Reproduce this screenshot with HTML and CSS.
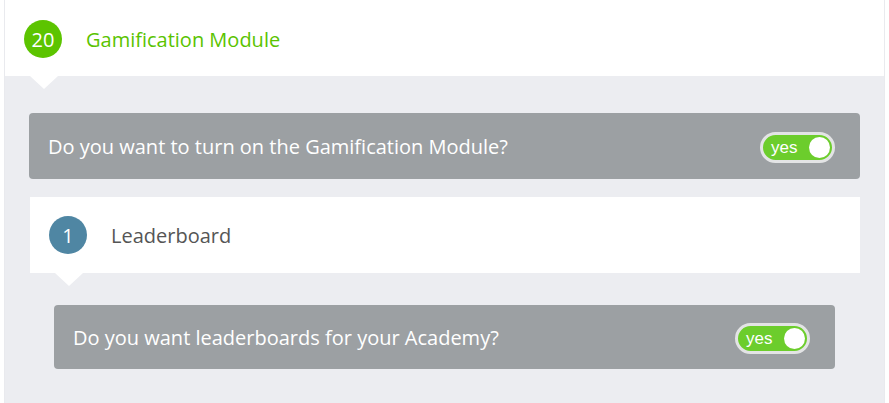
FILE: index.html
```html
<!DOCTYPE html>
<html>
<head>
<meta charset="utf-8">
<link rel="stylesheet" href="styles.css">
</head>
<body>
<div class="panel">
  <div class="step-head">
    <span class="badge badge-green">20</span>
    <span class="step-title">Gamification Module</span>
    <span class="arrow"></span>
  </div>
  <div class="step-body">
    <div class="question">
      <span class="q-text">Do you want to turn on the Gamification Module?</span>
      <span class="toggle"><span class="toggle-label">yes</span><span class="knob"></span></span>
    </div>
    <div class="sub-head">
      <span class="badge badge-blue">1</span>
      <span class="sub-title">Leaderboard</span>
      <span class="arrow arrow-sub"></span>
    </div>
    <div class="sub-body">
      <div class="question">
        <span class="q-text">Do you want leaderboards for your Academy?</span>
        <span class="toggle"><span class="toggle-label">yes</span><span class="knob"></span></span>
      </div>
    </div>
  </div>
</div>
</body>
</html>
```
FILE: styles.css
```css
html, body { margin: 0; padding: 0; background: #fff; }
body { font-family: "Open Sans", "Liberation Sans", sans-serif; }
.panel {
  margin-left: 4px;
  width: 881px;
  border-left: 1px solid #e9eaee;
  border-right: 1px solid #e9eaee;
  box-sizing: border-box;
}
.step-head {
  position: relative;
  height: 76px;
  display: flex;
  align-items: center;
  padding-left: 19px;
  padding-top: 2px;
  box-sizing: border-box;
  background: #fff;
}
.badge {
  width: 38px; height: 38px; border-radius: 50%;
  display: flex; align-items: center; justify-content: center;
  color: #fff; font-size: 20px; flex: none;
}
.badge-green { background: #5cc400; }
.badge-blue { background: #4f86a3; }
.step-title { margin-left: 24px; color: #5ac300; font-size: 20px; }
.arrow {
  position: absolute; left: 25px; bottom: -13px;
  width: 0; height: 0;
  border-left: 14px solid transparent;
  border-right: 14px solid transparent;
  border-top: 13px solid #fff;
}
.step-body {
  background: #ecedf1;
  padding: 37px 24px 34px 24px;
}
.question {
  height: 66px;
  background: #9ca0a3;
  border-radius: 4px;
  display: flex; align-items: center; justify-content: space-between;
  padding: 0 25px 0 19px;
  box-sizing: border-box;
}
.q-text { color: #fff; font-size: 20px; }
.toggle {
  width: 75px; height: 31px;
  box-sizing: border-box;
  border: 3px solid #e3e4e5;
  border-radius: 16px;
  background: #6ccd2c;
  display: flex; align-items: center; justify-content: space-between;
  padding: 0 2px 0 8px;
  margin-top: 2px;
}
.toggle-label { color: #fff; font-family: "Liberation Sans", Arial, sans-serif; font-size: 17px; margin-top: 2px; }
.knob { width: 21px; height: 21px; border-radius: 50%; background: #fff; }
.sub-head {
  position: relative;
  margin-top: 18px;
  margin-left: 1px;
  height: 76px;
  background: #fff;
  display: flex; align-items: center;
  padding-left: 19px;
  box-sizing: border-box;
}
.sub-title { margin-left: 24px; color: #555; font-size: 20px; }
.arrow-sub { left: 25px; bottom: -13px; }
.sub-body { padding: 32px 25px 0 25px; }
.sub-body .question { height: 64px; }
```
